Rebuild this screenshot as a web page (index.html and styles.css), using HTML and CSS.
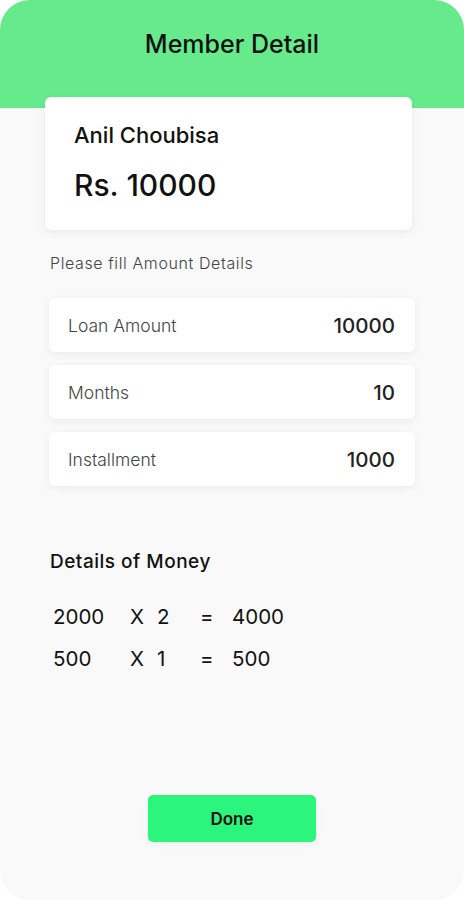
FILE: index.html
```html
<!DOCTYPE html>
<html lang="en">
<head>
    <meta charset="UTF-8">
    <meta name="viewport" content="width=device-width, initial-scale=1.0">
    <title>Member Detail</title>
    <link rel="stylesheet" href="styles.css">
</head>
<body>
    <div class="screen">
        <div class="header">
            <h1>Member Detail</h1>
        </div>

        <div class="member-card">
            <div class="member-name">Anil Choubisa</div>
            <div class="member-amount">Rs. 10000</div>
        </div>

        <p class="hint">Please fill Amount Details</p>

        <div class="fields">
            <div class="field">
                <span class="field-label">Loan Amount</span>
                <span class="field-value">10000</span>
            </div>
            <div class="field">
                <span class="field-label">Months</span>
                <span class="field-value">10</span>
            </div>
            <div class="field">
                <span class="field-label">Installment</span>
                <span class="field-value">1000</span>
            </div>
        </div>

        <h2 class="section-title">Details of Money</h2>

        <div class="money">
            <div class="money-row">
                <span>2000</span><span>X</span><span>2</span><span>=</span><span>4000</span>
            </div>
            <div class="money-row">
                <span>500</span><span>X</span><span>1</span><span>=</span><span>500</span>
            </div>
        </div>

        <div class="actions">
            <button type="button" class="done-btn">Done</button>
        </div>
    </div>
</body>
</html>
```

FILE: styles.css
```css
body {
    margin: 0;
    background: #ffffff;
    font-family: Inter, "Noto Sans", sans-serif;
    color: #111;
}
.screen {
    width: 464px;
    height: 900px;
    background: #f9f9f9;
    border-radius: 30px;
    overflow: hidden;
    display: flex;
    flex-direction: column;
}
.header {
    height: 108px;
    background: #66ea8c;
    flex-shrink: 0;
}
.header h1 {
    margin: 0;
    padding-top: 29px;
    text-align: center;
    font-size: 25px;
    font-weight: 500;
    line-height: 30px;
}
.member-card {
    margin: -11px 52px 0 45px;
    height: 133px;
    box-sizing: border-box;
    padding: 24px 29px 0;
    background: #fff;
    border-radius: 6px;
    box-shadow: 0 2px 8px rgba(0, 0, 0, 0.07);
}
.member-name {
    font-size: 22px;
    font-weight: 500;
    line-height: 28px;
}
.member-amount {
    margin-top: 18px;
    font-size: 30px;
    font-weight: 500;
    line-height: 36px;
}
.hint {
    margin: 23px 0 0 50px;
    font-size: 16px;
    font-weight: 300;
    letter-spacing: 0.6px;
    color: #444;
    line-height: 20px;
}
.fields {
    margin: 25px 49px 0 49px;
    display: flex;
    flex-direction: column;
    gap: 13px;
}
.field {
    height: 54px;
    display: flex;
    align-items: center;
    justify-content: space-between;
    padding: 0 20px 0 19px;
    background: #fff;
    border-radius: 6px;
    box-shadow: 0 2px 8px rgba(0, 0, 0, 0.06);
}
.field-label {
    font-size: 17.5px;
    font-weight: 300;
    color: #444;
}
.field-value {
    font-size: 20.5px;
    font-weight: 500;
    color: #222;
}
.section-title {
    margin: 64px 0 0 50px;
    font-size: 19px;
    font-weight: 500;
    letter-spacing: 0.5px;
    line-height: 24px;
}
.money {
    margin: 31px 0 0 53px;
    display: flex;
    flex-direction: column;
    gap: 18px;
}
.money-row {
    display: grid;
    grid-template-columns: 77px 27px 43px 32px auto;
    font-size: 20.5px;
    font-weight: 400;
    line-height: 24px;
}
.actions {
    margin-top: auto;
    padding-bottom: 58px;
    padding-left: 148px;
}
.done-btn {
    width: 168px;
    height: 47px;
    background: #2bf57d;
    border: none;
    border-radius: 5px;
    font-family: inherit;
    font-size: 17px;
    font-weight: 600;
    color: #111;
    box-shadow: 0 2px 6px rgba(0, 0, 0, 0.05);
    cursor: pointer;
}
```
